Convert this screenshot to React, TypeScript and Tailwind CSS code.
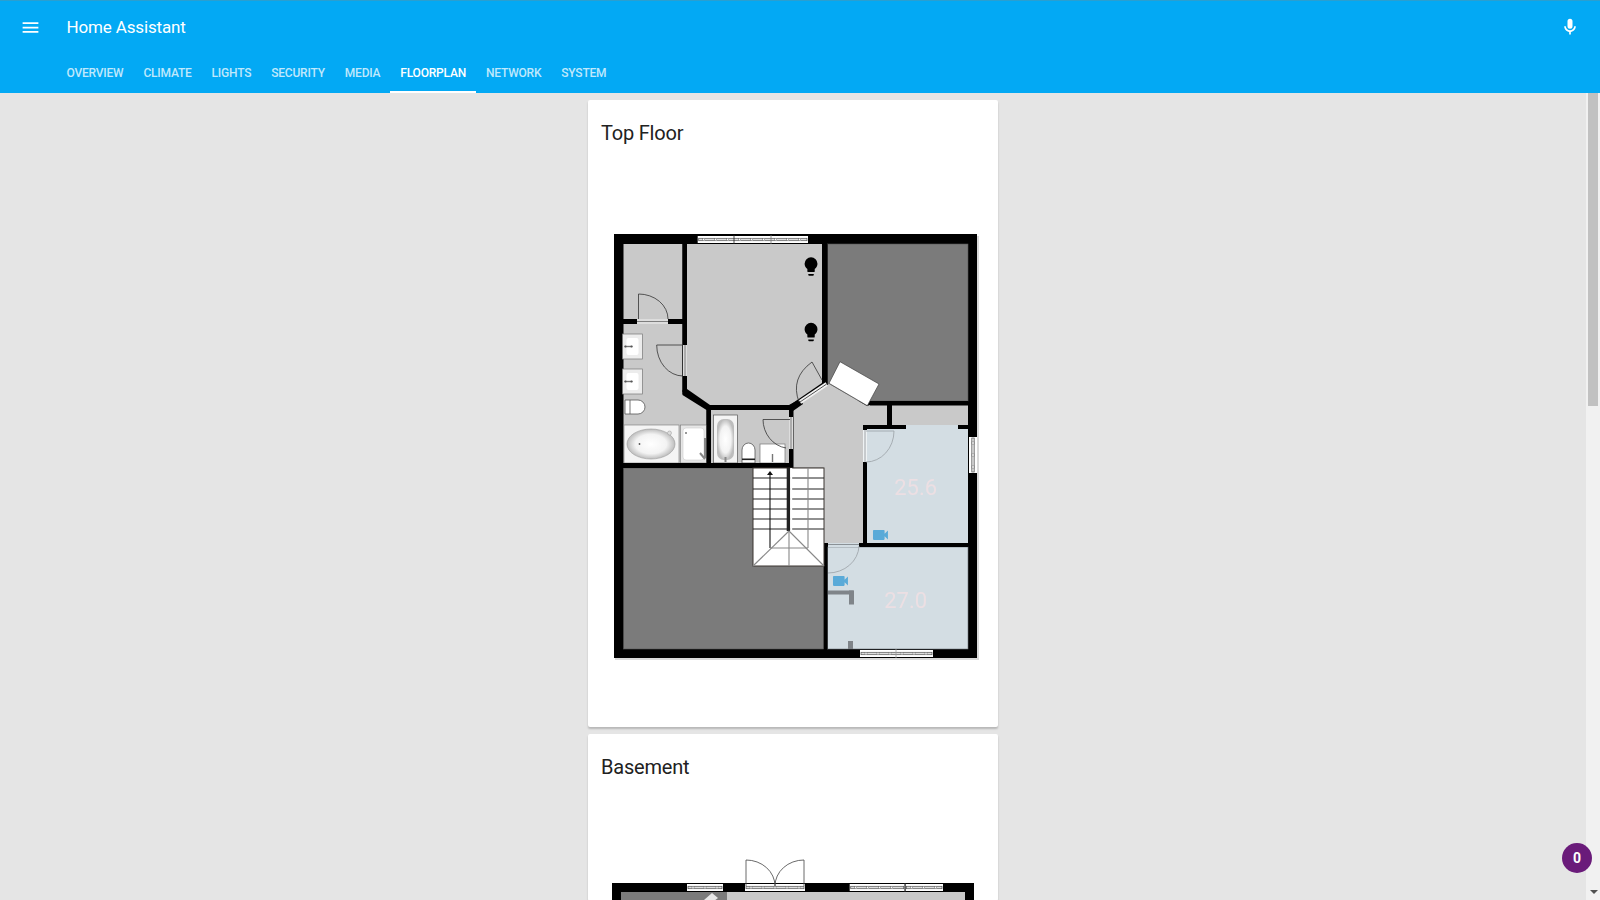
import React from "react";

const tabs = ["OVERVIEW", "CLIMATE", "LIGHTS", "SECURITY", "MEDIA", "FLOORPLAN", "NETWORK", "SYSTEM"];

const bulbPath =
  "M12,2A7,7 0 0,0 5,9C5,11.38 6.19,13.47 8,14.74V17A1,1 0 0,0 9,18H15A1,1 0 0,0 16,17V14.74C17.81,13.47 19,11.38 19,9A7,7 0 0,0 12,2M9,21A1,1 0 0,0 10,22H14A1,1 0 0,0 15,21V20H9V21Z";
const cameraPath =
  "M17,10.5V7A1,1 0 0,0 16,6H4A1,1 0 0,0 3,7V17A1,1 0 0,0 4,18H16A1,1 0 0,0 17,17V13.5L21,17.5V6.5L17,10.5Z";

const DARK = "#7b7b7b";
const LIGHT = "#c9c9c9";
const BLUE = "#d3dde3";

const Strip: React.FC<{ x: number; y: number; w: number; h: number }> = ({ x, y, w, h }) => {
  const horizontal = w > h;
  const length = horizontal ? w : h;
  const ticks: number[] = [];
  for (let t = 6; t < length - 3; t += 12) ticks.push(t);
  return (
    <g>
      <rect x={x} y={y} width={w} height={h} fill="#fff" />
      {horizontal ? (
        <>
          <rect x={x + 1} y={y + h / 2 - 1.2} width={w - 2} height={2.4} fill="#ddd" stroke="#555" strokeWidth={0.7} />
          {ticks.map((t) => (
            <rect key={t} x={x + t - 1} y={y + h / 2 - 1.2} width={2} height={2.4} fill="#fff" stroke="#666" strokeWidth={0.5} />
          ))}
        </>
      ) : (
        <>
          <rect x={x + w / 2 - 1.2} y={y + 1} width={2.4} height={h - 2} fill="#ddd" stroke="#555" strokeWidth={0.7} />
          {ticks.map((t) => (
            <rect key={t} x={x + w / 2 - 1.2} y={y + t - 1} width={2.4} height={2} fill="#fff" stroke="#666" strokeWidth={0.5} />
          ))}
        </>
      )}
    </g>
  );
};

const Sink: React.FC<{ x: number; y: number; w: number; h: number }> = ({ x, y, w, h }) => (
  <g>
    <rect x={x} y={y} width={w} height={h} fill="#ececec" stroke="#777" strokeWidth={0.7} />
    <rect x={x + 4} y={y + 4} width={w - 8} height={h - 8} rx={2} fill="#fff" />
    <rect x={x + 2} y={y + h / 2 - 0.7} width={8} height={1.4} fill="#777" />
    <circle cx={x + 3} cy={y + h / 2} r={1.1} fill="#555" />
    <circle cx={x + 9} cy={y + h / 2} r={1.1} fill="#555" />
  </g>
);

const TopFloor: React.FC = () => (
  <svg viewBox="588 155 410 572" className="block h-[572px] w-[410px] blur-[0.35px]">
    <defs>
      <radialGradient id="tub">
        <stop offset="0%" stopColor="#fff" />
        <stop offset="65%" stopColor="#f3f3f3" />
        <stop offset="100%" stopColor="#bdbdbd" />
      </radialGradient>
    </defs>
    {/* shell */}
    <rect x={615} y={236} width={364} height={424} fill="#bbb" opacity={0.55} />
    <rect x={614} y={234} width={363} height={424} fill="#000" />

    {/* rooms */}
    <rect x={623.5} y={244} width={59} height={75} fill={LIGHT} />
    <polygon points="623.5,324 682.5,324 682.5,394 706.5,409 706.5,463 623.5,463" fill={LIGHT} />
    <polygon points="687,244 822,244 822,383 790,405 708,405 687,391" fill={LIGHT} />
    <rect x={711} y={410} width={78} height={53} fill={LIGHT} />
    <rect x={827.5} y={244} width={140.5} height={157} fill={DARK} stroke="#555" strokeWidth={0.6} />
    <polygon points="793,408 829,384 867,406 870,405 887,405 887,425 863,425 863,543 793,543" fill={LIGHT} />
    <rect x={892} y={405} width={76} height={20} fill={LIGHT} />
    <rect x={906} y={425} width={52} height={4} fill={BLUE} />
    <rect x={867} y={429} width={101} height={114} fill={BLUE} />
    <rect x={623.5} y={468} width={200} height={181} fill={DARK} stroke="#555" strokeWidth={0.6} />
    <rect x={793} y={468} width={70} height={75} fill={LIGHT} />
    <rect x={827.5} y={547} width={140.5} height={102} fill={BLUE} stroke="#6d7478" strokeWidth={0.6} />
    <rect x={828} y={543} width={31} height={4} fill={BLUE} />
    <line x1={828} y1={544.5} x2={859} y2={544.5} stroke="#8a9196" strokeWidth={1} />

    {/* windows */}
    <Strip x={697.7} y={236} w={110.3} h={7} />
    <line x1={734} y1={235} x2={734} y2={244} stroke="#222" strokeWidth={0.8} />
    <line x1={771} y1={235} x2={771} y2={244} stroke="#777" strokeWidth={0.8} />
    <Strip x={969} y={437} w={8} h={36} />
    <Strip x={860} y={650} w={73} h={7} />
    <line x1={896} y1={649} x2={896} y2={658} stroke="#999" strokeWidth={0.8} />

    {/* white box */}
    <polygon points="840,361.7 879,384 867.3,405.7 829,383.3" fill="#fff" stroke="#444" strokeWidth={0.7} />

    {/* bath 1 fixtures */}
    <Sink x={622.5} y={334} w={20} h={25} />
    <Sink x={622.5} y={369} w={20} h={25} />
    <path d="M625,400 H638 A7,7 0 0 1 638,414 H625 Z" fill="#fff" stroke="#555" strokeWidth={0.8} />
    <line x1={630} y1={400} x2={630} y2={414} stroke="#555" strokeWidth={0.8} />
    <rect x={624} y={425} width={55} height={38} fill="#f4f4f4" stroke="#777" strokeWidth={0.6} />
    <ellipse cx={651} cy={444} rx={24} ry={15} fill="url(#tub)" stroke="#999" strokeWidth={0.6} />
    <circle cx={639.5} cy={444} r={0.9} fill="#555" />
    <circle cx={669.5} cy={433} r={2} fill="#ddd" stroke="#999" strokeWidth={0.5} />
    <rect x={680.5} y={425} width={26} height={38} fill="#e6e6e6" stroke="#777" strokeWidth={0.6} />
    <rect x={683} y={428} width={21} height={32} rx={3} fill="#fff" stroke="#ccc" strokeWidth={0.6} />
    <line x1={705} y1={438} x2={705} y2={458} stroke="#888" strokeWidth={2} />
    <line x1={700} y1={453} x2={705} y2={459} stroke="#888" strokeWidth={2} />
    <circle cx={686} cy={433} r={1} fill="#777" />

    {/* bath 2 fixtures */}
    <rect x={713.5} y={415} width={24} height={48} fill="#f4f4f4" stroke="#555" strokeWidth={0.7} />
    <rect x={717} y={419} width={17} height={41} rx={7} fill="url(#tub)" />
    <rect x={724.5} y={457} width={2} height={5} fill="#888" />
    <path d="M742,463 V450 A6.5,7 0 0 1 755,450 V463 Z" fill="#fff" stroke="#555" strokeWidth={0.8} />
    <rect x={742} y={458.5} width={13} height={1.6} fill="#222" />
    <rect x={760} y={444} width={25} height={19} fill="#fff" stroke="#777" strokeWidth={0.7} />
    <rect x={771.8} y={454} width={1.4} height={8} fill="#777" />

    {/* walls */}
    <g fill="#000">
      <rect x={682.5} y={244} width={4.5} height={148} />
      <rect x={623.5} y={319} width={59} height={5} />
      <polygon points="682.5,390 687,389 710,405 792,405 792,410 711,410 711,468 706.5,468 706.5,410 682.5,395" />
      <rect x={623} y={463} width={170} height={5} />
      <rect x={789} y={406} width={4.5} height={62} />
      <polygon points="789,405 800,399 803,404 793,411 789,411" />
      <rect x={822} y={244} width={5.5} height={141} />
      <rect x={870} y={401} width={98} height={4.5} />
      <rect x={887} y={405} width={5} height={21} />
      <rect x={863} y={425} width={43} height={4} />
      <rect x={958} y={425} width={10} height={4} />
      <rect x={863} y={425} width={4} height={122} />
      <rect x={859} y={543} width={109} height={4} />
      <rect x={824} y={543} width={3.5} height={106} />
    </g>

    {/* door strips */}
    <line x1={800} y1={402} x2={826.7} y2={384} stroke="#f2f2f2" strokeWidth={4} />
    <line x1={800} y1={402} x2={826.7} y2={384} stroke="#555" strokeWidth={1} />
    <rect x={637} y={319} width={31} height={5} fill="#ddd" />
    <line x1={637} y1={321.5} x2={668} y2={321.5} stroke="#666" strokeWidth={0.8} />
    <rect x={683} y={345} width={4} height={31} fill="#ddd" />
    <line x1={685} y1={345} x2={685} y2={376} stroke="#666" strokeWidth={0.8} />
    <rect x={789} y={417} width={4} height={32} fill="#ddd" />
    <line x1={791} y1={417} x2={791} y2={449} stroke="#666" strokeWidth={0.8} />
    <rect x={863} y={430} width={4} height={32} fill="#eef2f4" />
    <line x1={865} y1={430} x2={865} y2={462} stroke="#8a9196" strokeWidth={0.8} />

    {/* door swings */}
    <g fill="none" stroke="#333" strokeWidth={0.8}>
      <path d="M638.5,319 V294 A29.5,25 0 0 1 668,319" />
      <path d="M683,345 H656.7 A26.3,31 0 0 0 683,376" />
      <path d="M790,419.5 H763 A27,29 0 0 0 786,448" />
      <path d="M799,402 Q790,378 812,362 L822,380" />
    </g>
    <g fill="none" stroke="#9aa1a6" strokeWidth={0.8}>
      <path d="M866,431 H894 A28,31 0 0 1 866,462" />
      <path d="M859,546 A31,28 0 0 1 828,573" />
    </g>

    {/* stairs */}
    <rect x={753} y={468} width={71} height={98} fill="#fff" stroke="#3b3530" strokeWidth={1} />
    <g stroke="#222" strokeWidth={1.1}>
      {[478, 489, 499, 509, 519, 529].map((y) => (
        <line key={y} x1={753} y1={y} x2={824} y2={y} />
      ))}
    </g>
    <rect x={786.7} y={468} width={3.5} height={63} fill="#222" />
    <rect x={790.2} y={468} width={2} height={63} fill="#fff" />
    <line x1={770} y1={474} x2={770} y2={548} stroke="#111" strokeWidth={1.1} />
    <polygon points="770,471 773,475 767,475" fill="#111" />
    <g stroke="#888" strokeWidth={1.1}>
      <line x1={808} y1={468} x2={808} y2={548} />
      <line x1={789} y1={531} x2={789} y2={566} />
      <line x1={789} y1={531} x2={753} y2={566} />
      <line x1={789} y1={531} x2={824} y2={566} />
      <line x1={770} y1={548} x2={808} y2={548} />
    </g>

    {/* closet stub */}
    <g fill="#7f8489">
      <rect x={828} y={590.5} width={25.5} height={4} />
      <rect x={849} y={590.5} width={5} height={14} />
      <rect x={848} y={641} width={5} height={8} />
    </g>

    {/* overlays */}
    <path d={bulbPath} fill="#000" transform="translate(800,255.5) scale(0.92)" />
    <path d={bulbPath} fill="#000" transform="translate(800,321) scale(0.92)" />
    <path d={cameraPath} fill="#5aaad8" transform="translate(870.5,525) scale(0.83)" />
    <path d={cameraPath} fill="#5aaad8" transform="translate(830.5,571) scale(0.83)" />
    <text x={915.7} y={495} textAnchor="middle" fontSize={22} fill="#ecdfe3">25.6</text>
    <text x={905.7} y={608} textAnchor="middle" fontSize={22} fill="#ecdfe3">27.0</text>
  </svg>
);

const Basement: React.FC = () => (
  <svg viewBox="588 788 410 112" className="block h-[112px] w-[410px] blur-[0.35px]">
    <rect x={612} y={882} width={362} height={30} fill="#000" />
    <rect x={621} y={891} width={106} height={20} fill={DARK} />
    <rect x={727} y={891} width={238} height={20} fill={LIGHT} />
    <polygon points="712,892 718,897 714,900 706,900 704,899" fill="#e8e8e8" />
    <Strip x={687} y={883} w={36} h={7} />
    <Strip x={745} y={883} w={60} h={7} />
    <Strip x={849.7} y={883} w={55} h={7} />
    <Strip x={905.5} y={883} w={37.5} h={7} />
    <line x1={905} y1={882} x2={905} y2={891} stroke="#333" strokeWidth={0.8} />
    <g fill="none" stroke="#444" strokeWidth={0.8}>
      <path d="M746,885 V859 A29,26 0 0 1 775,885" />
      <path d="M804,885 V859 A29,26 0 0 0 775,885" />
    </g>
  </svg>
);

const Card: React.FC<{ title: string; children: React.ReactNode }> = ({ title, children }) => (
  <div className="w-[410px] shrink-0 rounded-[2px] bg-white shadow-[0_2px_2px_rgba(0,0,0,0.2)]">
    <div className="h-[55px] pl-[13px] pt-[17px] text-[20px] leading-[32px] tracking-[-0.2px] text-[#212121]">{title}</div>
    {children}
  </div>
);

export default function App() {
  return (
    <div className="relative flex h-[900px] w-[1600px] flex-col overflow-hidden bg-[#e5e5e5] font-[Roboto,sans-serif]">
      <header className="h-[93px] shrink-0 border-t border-[#2a9fd0] bg-[#03a9f4] text-white">
        <div className="flex h-[52px] items-center pl-[19.5px] pr-[20px]">
          <svg viewBox="0 0 24 24" className="h-[21px] w-[21px] fill-white">
            <path d="M3,6H21V8H3V6M3,11H21V13H3V11M3,16H21V18H3V16Z" />
          </svg>
          <div className="ml-[26px] flex-1 text-[17px] leading-[26px] tracking-[-0.15px]">Home Assistant</div>
          <svg viewBox="0 0 24 24" className="h-[20px] w-[20px] fill-white">
            <path d="M12,2A3,3 0 0,1 15,5V11A3,3 0 0,1 12,14A3,3 0 0,1 9,11V5A3,3 0 0,1 12,2M19,11C19,14.53 16.39,17.44 13,17.93V21H11V17.93C7.61,17.44 5,14.53 5,11H7A5,5 0 0,0 12,16A5,5 0 0,0 17,11H19Z" />
          </svg>
        </div>
        <nav className="flex h-[40px] pl-[56.5px]">
          {tabs.map((tab) =>
            tab === "FLOORPLAN" ? (
              <div key={tab} className="flex items-center border-b-2 border-white px-[10px] pt-[2px] text-[12px] font-medium tracking-[-0.21px] text-white">
                {tab}
              </div>
            ) : (
              <div key={tab} className="flex items-center px-[10px] text-[12px] font-medium tracking-[-0.21px] text-white/75">
                {tab}
              </div>
            ),
          )}
        </nav>
      </header>

      <div className="flex min-h-0 flex-1">
        <main className="flex flex-1 flex-col items-center gap-[7px] overflow-hidden pt-[7px]">
          <Card title="Top Floor">
            <TopFloor />
          </Card>
          <Card title="Basement">
            <Basement />
          </Card>
        </main>
        <aside className="relative w-[14px] shrink-0 bg-[#f1f1f1]">
          <div className="ml-[2px] h-[313px] w-[10px] bg-[#c1c1c1]" />
          <div className="absolute bottom-[6px] left-[4px] h-0 w-0 border-x-[4px] border-t-[4px] border-x-transparent border-t-[#505050]" />
        </aside>
      </div>

      <div className="absolute left-[1562px] top-[843px] flex h-[30px] w-[30px] items-center justify-center rounded-full bg-[#6a1b7a] text-[14px] font-bold text-white">
        0
      </div>
    </div>
  );
}
